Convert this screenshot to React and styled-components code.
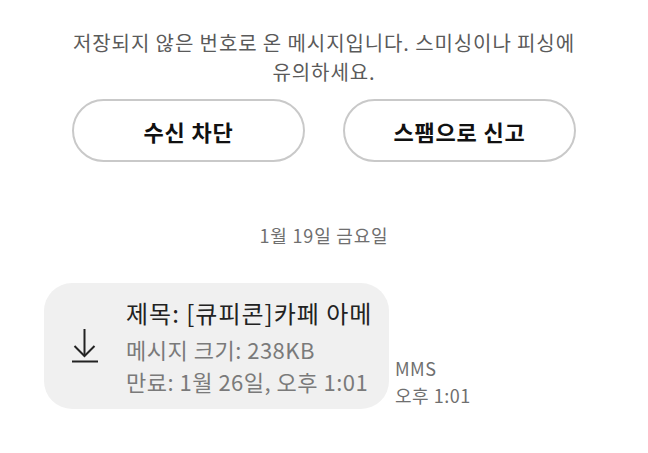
import React from "react";
import styled, { createGlobalStyle } from "styled-components";

const GlobalStyle = createGlobalStyle`
  html, body {
    margin: 0;
    padding: 0;
    background: #ffffff;
  }
  body {
    font-family: "Noto Sans CJK KR", "Noto Sans", Roboto, sans-serif;
  }
`;

const Screen = styled.div`
  width: 648px;
  height: 453px;
  overflow: hidden;
  display: flex;
  flex-direction: column;
  background: #fff;
`;

const Notice = styled.p`
  margin: 28px 0 0;
  padding: 0 40px;
  text-align: center;
  font-size: 20px;
  letter-spacing: 0.9px;
  line-height: 29px;
  color: #5a5a5a;
  white-space: nowrap;
`;

const ButtonRow = styled.div`
  display: flex;
  gap: 38px;
  padding: 0 72px;
  margin-top: 13px;
`;

const PillButton = styled.button`
  flex: 1;
  height: 63px;
  border: 2px solid #c9c9c9;
  border-radius: 32px;
  background: #fff;
  font-family: inherit;
  font-size: 22px;
  letter-spacing: 0.8px;
  font-weight: 700;
  color: #111;
`;

const DateLabel = styled.div`
  margin-top: 60px;
  text-align: center;
  font-size: 18px;
  letter-spacing: 0.8px;
  color: #6f6f6f;
`;

const MessageRow = styled.div`
  display: flex;
  align-items: flex-end;
  gap: 6px;
  margin-top: 35px;
  padding-left: 44px;
`;

const Bubble = styled.div`
  display: flex;
  align-items: center;
  width: 345px;
  height: 126px;
  box-sizing: border-box;
  padding: 0 0 0 28px;
  background: #f0f0f0;
  border-radius: 28px;
`;

const IconBox = styled.div`
  width: 26px;
  margin-right: 28px;
  display: flex;
  align-items: center;
  justify-content: center;
`;

const Lines = styled.div`
  display: flex;
  flex-direction: column;
`;

const Subject = styled.div`
  font-size: 24px;
  letter-spacing: 1px;
  line-height: 36px;
  margin-bottom: 2px;
  color: #222;
  white-space: nowrap;
`;

const Detail = styled.div`
  font-size: 22px;
  letter-spacing: 0.5px;
  line-height: 32px;
  color: #7a7a7a;
  white-space: nowrap;
`;

const Meta = styled.div`
  display: flex;
  flex-direction: column;
  font-size: 18px;
  letter-spacing: 0.5px;
  line-height: 27px;
  color: #6f6f6f;
`;

const DownloadIcon = () => (
  <svg width="26" height="34" viewBox="0 0 26 34" fill="none" stroke="#222" strokeWidth="2" strokeLinecap="butt">
    <path d="M12.5 0 V27" />
    <path d="M2.5 17 L12.5 27 L22.5 17" />
    <path d="M0 32.5 H26" />
  </svg>
);

export default function App() {
  return (
    <Screen>
      <GlobalStyle />
      <Notice>
        저장되지 않은 번호로 온 메시지입니다. 스미싱이나 피싱에
        <br />
        유의하세요.
      </Notice>
      <ButtonRow>
        <PillButton>수신 차단</PillButton>
        <PillButton>스팸으로 신고</PillButton>
      </ButtonRow>
      <DateLabel>1월 19일 금요일</DateLabel>
      <MessageRow>
        <Bubble>
          <IconBox>
            <DownloadIcon />
          </IconBox>
          <Lines>
            <Subject>제목: [큐피콘]카페 아메</Subject>
            <Detail>메시지 크기: 238KB</Detail>
            <Detail>만료: 1월 26일, 오후 1:01</Detail>
          </Lines>
        </Bubble>
        <Meta>
          <span>MMS</span>
          <span>오후 1:01</span>
        </Meta>
      </MessageRow>
    </Screen>
  );
}
